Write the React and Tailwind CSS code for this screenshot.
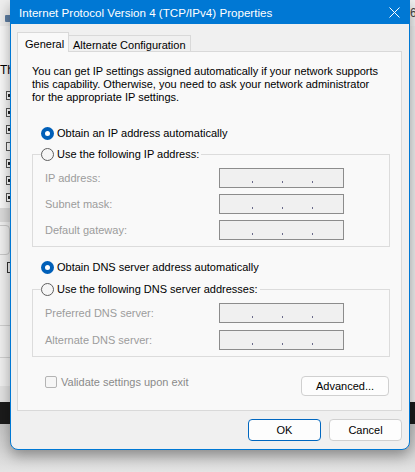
import React from 'react';

const font = { fontFamily: '"Liberation Sans", Arial, sans-serif' };

function Radio({ checked, label }) {
  return (
    <div className="flex items-center h-[14px] bg-[#f9f9f9]">
      {checked ? (
        <span className="w-[13px] h-[13px] rounded-full bg-[#005fb8] flex items-center justify-center">
          <span className="w-[5px] h-[5px] rounded-full bg-white" />
        </span>
      ) : (
        <span className="w-[13px] h-[13px] rounded-full border border-[#5f5f5f] bg-[#f6f6f6]" />
      )}
      <span className="ml-[3px] text-[11px] text-black leading-[14px] pr-[2px]">{label}</span>
    </div>
  );
}

function IpBox() {
  return (
    <div className="w-[125px] h-[20px] border border-[#8c8c8c] bg-[#f0f0f0] flex items-start pt-[12px] pl-[32px] gap-[29px]">
      <span className="w-[1px] h-[2px] bg-[#6a6a8a]" />
      <span className="w-[1px] h-[2px] bg-[#6a6a8a]" />
      <span className="w-[1px] h-[2px] bg-[#6a6a8a]" />
    </div>
  );
}

function Field({ label }) {
  return (
    <div className="flex items-center h-[20px]">
      <span className="w-[174px] text-[11px] text-[#9c9c9c]">{label}</span>
      <IpBox />
    </div>
  );
}

function Group({ legend, rows, gap }) {
  return (
    <fieldset className="w-[358px] border border-[#dcdcdc] p-0">
      <legend className="ml-[8px] p-0">
        <Radio label={legend} />
      </legend>
      <div className={`flex flex-col ${gap} pl-[12px] pb-[6px] pt-[7px]`}>
        {rows.map(r => (
          <Field key={r} label={r} />
        ))}
      </div>
    </fieldset>
  );
}

function Backdrop() {
  return (
    <>
      {/* window behind, left edge */}
      <div className="absolute left-0 top-0 w-[12px] h-[26px] bg-[#eeeeee]" />
      <div className="absolute left-[5px] top-[15px] w-[6px] h-[7px] bg-[#5d7ea3] rounded-[1px]" />
      <div className="absolute left-0 top-[26px] w-[12px] h-[182px] bg-[#f7f7f7]" />
      <div className="absolute left-0 top-[63px] text-[12px] text-black leading-[14px]">Th</div>
      <div className="absolute left-[6px] top-[91px] flex flex-col gap-[8px]">
        {[true, true, true, false, true, true, true].map((c, i) => (
          <div key={i} className="w-[9px] h-[9px] border border-[#555] bg-white flex items-center pl-[1px]">
            {c && <span className="w-[3px] h-[3px] bg-[#222]" />}
          </div>
        ))}
      </div>
      <div className="absolute left-0 top-[208px] w-[12px] h-[14px] bg-[#dadada]" />
      <div className="absolute left-0 top-[222px] w-[12px] h-[180px] bg-[#efefef]" />
      <div className="absolute left-[-6px] top-[225px] w-[16px] h-[30px] border border-[#c8c8c8] rounded-[4px]" />
      <div className="absolute left-[7px] top-[262px] w-[4px] h-[11px] border-l border-t border-b border-[#333]" />
      <div className="absolute left-0 top-[325px] w-[12px] h-[1px] bg-[#cfcfcf]" />
      <div className="absolute left-0 top-[357px] w-[12px] h-[1px] bg-[#cfcfcf]" />
      <div className="absolute left-0 top-[386px] w-[12px] h-[16px] bg-[#e2e2e2]" />
      {/* dark taskbar-like band */}
      <div className="absolute left-0 top-[402px] w-[415px] h-[22px] bg-[#1b1b1b]" />
      <div className="absolute left-0 top-[424px] w-[415px] h-[48px] bg-gradient-to-b from-[#c4c4c4] to-[#e4e4e4]" />
      {/* right edge */}
      <div className="absolute right-0 top-0 w-[6px] h-[26px] bg-[#f0f0f0]" />
      <div className="absolute left-[410px] top-[6px] text-[12px] text-[#444] leading-[14px]">6</div>
      <div className="absolute right-0 top-[26px] w-[6px] h-[376px] bg-[#ececec]" />
    </>
  );
}

export default function App() {
  return (
    <div className="relative w-[415px] h-[472px] overflow-hidden bg-[#ececec]" style={font}>
      <Backdrop />

      <div className="absolute left-[10px] top-0 w-[400px] h-[450px] border border-[#0078d4] rounded-b-[8px] bg-[#f0f0f0] flex flex-col shadow-[0_6px_14px_rgba(0,0,0,0.35)]">
        {/* title bar */}
        <div className="h-[24px] -mt-[1px] -mx-[1px] pt-[1px] bg-[#0078d4] flex items-center justify-between pl-[9px] pr-[9px]">
          <span className="text-white text-[11.6px] leading-[14px]">Internet Protocol Version 4 (TCP/IPv4) Properties</span>
          <svg width="11" height="11" viewBox="0 0 11 11" className="mr-[1px]">
            <path d="M0.5 0.5 L10.5 10.5 M10.5 0.5 L0.5 10.5" stroke="white" strokeWidth="1" />
          </svg>
        </div>

        <div className="pt-[8px] pl-[6px] pr-[7px] flex flex-col">
          {/* tabs */}
          <div className="flex items-end h-[20px] -mb-[1px] relative z-10">
            <div className="w-[52px] h-[20px] border border-b-0 border-[#d9d9d9] bg-[#f9f9f9] text-[11px] text-black pl-[7px] pt-[3px]">
              General
            </div>
            <div className="w-[122px] h-[17px] border border-l-0 border-b border-[#d9d9d9] bg-[#f0f0f0] text-[11px] text-black pl-[4px] pt-[2px] leading-[14px]">
              Alternate Configuration
            </div>
          </div>

          {/* tab panel */}
          <div className="h-[360px] border border-[#d9d9d9] bg-[#f9f9f9] pl-[14px] pt-[13px]">
            <p className="text-[11px] leading-[13px] text-black w-[350px]">
              You can get IP settings assigned automatically if your network supports this capability. Otherwise, you need to ask your network administrator for the appropriate IP settings.
            </p>

            <div className="mt-[22px] ml-[9px]">
              <Radio checked label="Obtain an IP address automatically" />
            </div>
            <div className="mt-[7px]">
              <Group
                legend="Use the following IP address:"
                rows={['IP address:', 'Subnet mask:', 'Default gateway:']}
                gap="gap-[6px]"
              />
            </div>

            <div className="mt-[13px] ml-[9px]">
              <Radio checked label="Obtain DNS server address automatically" />
            </div>
            <div className="mt-[8px]">
              <Group
                legend="Use the following DNS server addresses:"
                rows={['Preferred DNS server:', 'Alternate DNS server:']}
                gap="gap-[7px]"
              />
            </div>

            <div className="mt-[19px] flex items-start w-[358px]">
              <div className="ml-[13px] flex items-center">
                <span className="w-[12px] h-[12px] border border-[#b4b4b4] rounded-[2px] bg-[#f6f6f6]" />
                <span className="ml-[4px] text-[11px] text-[#8a8a8a] leading-[12px]">Validate settings upon exit</span>
              </div>
              <button className="ml-auto mr-[1px] w-[88px] h-[20px] border border-[#d0d0d0] rounded-[4px] bg-[#fdfdfd] text-[11px] text-black leading-[14px]">
                Advanced...
              </button>
            </div>
          </div>

          {/* dialog buttons */}
          <div className="mt-[8px] flex justify-end gap-[8px]">
            <button className="w-[73px] h-[22px] border border-[#0067c0] rounded-[4px] bg-[#fdfdfd] text-[11px] text-black">
              OK
            </button>
            <button className="w-[73px] h-[22px] border border-[#d0d0d0] rounded-[4px] bg-[#fdfdfd] text-[11px] text-black">
              Cancel
            </button>
          </div>
        </div>
      </div>
    </div>
  );
}
